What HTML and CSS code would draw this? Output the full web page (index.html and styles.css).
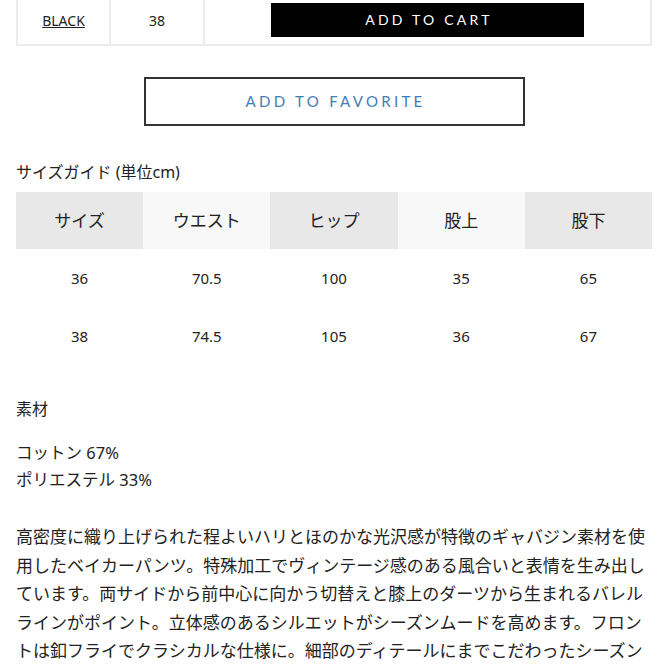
FILE: index.html
```html
<!DOCTYPE html>
<html lang="ja">
<head>
<meta charset="utf-8">
<link rel="stylesheet" href="styles.css">
</head>
<body>
<div class="page">
  <div class="stock">
    <div class="cell color"><a href="#">BLACK</a></div>
    <div class="cell size">38</div>
    <div class="cell action"><button class="cart">ADD TO CART</button></div>
  </div>
  <div class="fav-wrap"><button class="fav">ADD TO FAVORITE</button></div>

  <h2 class="title">サイズガイド (単位cm)</h2>
  <div class="sizes">
    <div class="th dark">サイズ</div>
    <div class="th light">ウエスト</div>
    <div class="th dark">ヒップ</div>
    <div class="th light">股上</div>
    <div class="th dark">股下</div>
    <div class="td">36</div><div class="td">70.5</div><div class="td">100</div><div class="td">35</div><div class="td">65</div>
    <div class="td">38</div><div class="td">74.5</div><div class="td">105</div><div class="td">36</div><div class="td">67</div>
  </div>

  <h2 class="title material">素材</h2>
  <p class="comp">コットン 67%<br>ポリエステル 33%</p>

  <p class="desc">高密度に織り上げられた程よいハリとほのかな光沢感が特徴のギャバジン素材を使用したベイカーパンツ。特殊加工でヴィンテージ感のある風合いと表情を生み出しています。両サイドから前中心に向かう切替えと膝上のダーツから生まれるバレルラインがポイント。立体感のあるシルエットがシーズンムードを高めます。フロントは釦フライでクラシカルな仕様に。細部のディテールにまでこだわったシーズンレスで活躍する一着です。</p>
</div>
</body>
</html>
```
FILE: styles.css
```css
* { box-sizing: border-box; }
html, body { margin: 0; padding: 0; background: #fff; }
body {
  font-family: "Noto Sans", "Noto Sans CJK JP", sans-serif;
  color: #222;
  overflow: hidden;
}
.page {
  width: 669px;
  padding: 0 17px 0 16px;
  margin-top: -5px;
}
.stock {
  display: grid;
  grid-template-columns: 93px 94px 1fr;
  border: 2px solid #ececec;
  height: 51px;
}
.cell {
  display: flex;
  align-items: center;
  justify-content: center;
  font-size: 14px;
  border-right: 2px solid #ececec;
}
.cell.action { border-right: none; }
.cell a { color: #222; text-decoration: underline; }
.cart {
  width: 313px;
  height: 34px;
  background: #000;
  color: #fff;
  border: none;
  font-family: "Lato", "Noto Sans", sans-serif;
  font-size: 14px;
  letter-spacing: 3.2px;
  padding: 0 0 0 3px;
  margin-top: -2px;
}
.fav-wrap {
  display: flex;
  justify-content: center;
  margin-top: 31px;
}
.fav {
  width: 381px;
  height: 49px;
  background: #fff;
  border: 2px solid #333;
  color: #3f7db8;
  font-family: "Lato", "Noto Sans", sans-serif;
  font-size: 15px;
  letter-spacing: 3.3px;
  padding: 0 0 2px 3px;
}
.title {
  font-size: 16px;
  font-weight: normal;
  margin: 34px 0 0;
  line-height: 24px;
}
.sizes {
  display: grid;
  grid-template-columns: repeat(5, 1fr);
  margin-top: 8px;
}
.th {
  height: 57px;
  display: flex;
  align-items: center;
  justify-content: center;
  font-size: 17px;
  padding-bottom: 3px;
}
.th.dark { background: #e8e8e8; }
.th.light { background: #f8f8f8; }
.td {
  height: 58px;
  display: flex;
  align-items: center;
  justify-content: center;
  font-size: 15px;
}
.material { margin-top: 32px; }
.comp {
  margin: 18px 0 0;
  font-size: 16.5px;
  line-height: 27px;
}
.desc {
  margin: 30px 0 0;
  font-size: 17px;
  line-height: 28.5px;
}
```
